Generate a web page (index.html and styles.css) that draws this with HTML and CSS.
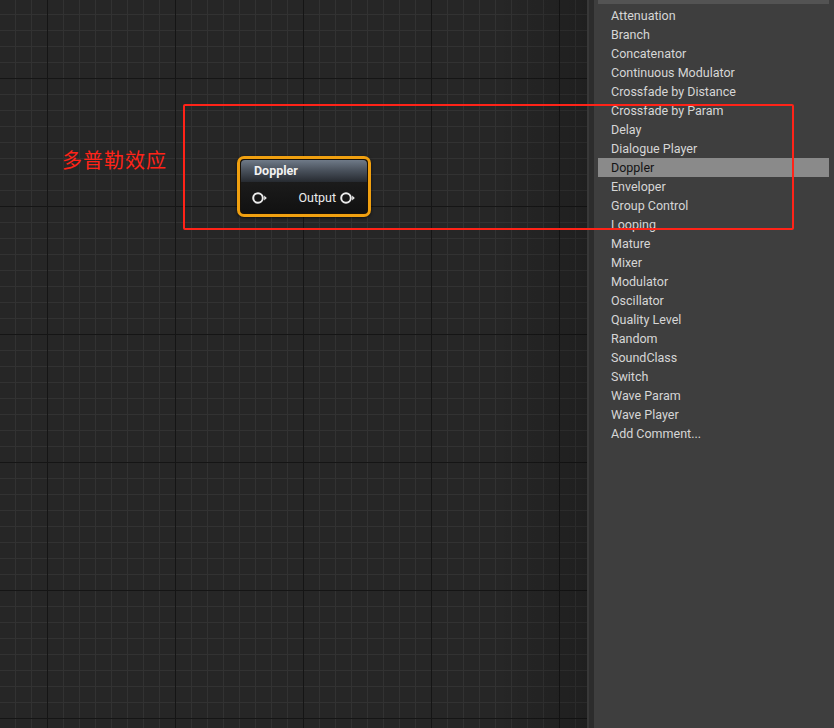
FILE: index.html
```html
<!DOCTYPE html>
<html>
<head>
<meta charset="utf-8">
<link rel="stylesheet" href="styles.css">
</head>
<body>
<div class="app">
  <div class="graph">
    <div class="note">多普勒效应</div>
    <div class="node">
      <div class="node-inner">
        <div class="node-title">Doppler</div>
        <div class="node-body">
          <span class="pin"><svg width="16" height="14" viewBox="0 0 16 14"><circle cx="6" cy="7" r="4.8" fill="none" stroke="#ececec" stroke-width="2"/><path d="M12.2 4.5 L14.8 7 L12.2 9.5 Z" fill="#ececec"/></svg></span>
          <span class="out">Output <svg width="16" height="14" viewBox="0 0 16 14"><circle cx="6" cy="7" r="4.8" fill="none" stroke="#ececec" stroke-width="2"/><path d="M12.2 4.5 L14.8 7 L12.2 9.5 Z" fill="#ececec"/></svg></span>
        </div>
      </div>
    </div>
  </div>
  <div class="sep"></div>
  <div class="panel">
    <div class="head">Sound Node</div>
    <ul class="list">
      <li>Attenuation</li>
      <li>Branch</li>
      <li>Concatenator</li>
      <li>Continuous Modulator</li>
      <li>Crossfade by Distance</li>
      <li>Crossfade by Param</li>
      <li>Delay</li>
      <li>Dialogue Player</li>
      <li class="sel">Doppler</li>
      <li>Enveloper</li>
      <li>Group Control</li>
      <li>Looping</li>
      <li>Mature</li>
      <li>Mixer</li>
      <li>Modulator</li>
      <li>Oscillator</li>
      <li>Quality Level</li>
      <li>Random</li>
      <li>SoundClass</li>
      <li>Switch</li>
      <li>Wave Param</li>
      <li>Wave Player</li>
      <li>Add Comment...</li>
    </ul>
  </div>
  <div class="redbox"></div>
</div>
</body>
</html>
```

FILE: styles.css
```css
html, body {
  margin: 0;
  padding: 0;
  width: 834px;
  height: 728px;
  overflow: hidden;
  background: #262626;
  font-family: Roboto, "Noto Sans", sans-serif;
}
.app {
  position: relative;
  display: flex;
  width: 834px;
  height: 728px;
}
.graph {
  position: relative;
  width: 587px;
  height: 728px;
  flex: none;
  overflow: hidden;
  background-color: #262626;
  background-image:
    linear-gradient(to right, #151515 1px, transparent 1px),
    linear-gradient(to bottom, #151515 1px, transparent 1px),
    linear-gradient(to right, #323232 1px, transparent 1px),
    linear-gradient(to bottom, #323232 1px, transparent 1px);
  background-size: 128px 128px, 128px 128px, 16px 16px, 16px 16px;
  background-position: 47px 0, 0 78px, 15px 0, 0 14px;
}
.graph::after {
  content: "";
  position: absolute;
  top: 0;
  right: 0;
  width: 90px;
  height: 100%;
  background: linear-gradient(to right, rgba(0,0,0,0), rgba(0,0,0,0.18));
  pointer-events: none;
}
.sep {
  width: 7px;
  flex: none;
  border-left: 2px solid #383838;
  box-sizing: border-box;
  background: #2c2c2c;
}
.panel {
  flex: 1;
  background: #3e3e3e;
  padding: 0 5px 0 4px;
  overflow: hidden;
}
.head {
  margin-top: -13px;
  height: 17px;
  margin-bottom: 2px;
  background: #535353;
  color: #cfcfcf;
  font-size: 13px;
  line-height: 17px;
  padding-left: 9px;
}
.list {
  list-style: none;
  margin: 0;
  padding: 0;
}
.list li {
  height: 19px;
  line-height: 19px;
  padding-left: 13px;
  font-size: 12.5px;
  color: #d6d6d6;
  white-space: nowrap;
}
.list li.sel {
  background: #8a8a8a;
  color: #141414;
}
.note {
  position: absolute;
  left: 62px;
  top: 147px;
  color: #ff2318;
  font-family: "Noto Sans CJK SC", sans-serif;
  font-size: 20px;
  line-height: 26px;
  letter-spacing: 1px;
}
.redbox {
  position: absolute;
  left: 183px;
  top: 104px;
  width: 611px;
  height: 126px;
  box-sizing: border-box;
  border: 2.5px solid #ff2318;
  border-radius: 2px;
  pointer-events: none;
}
.node {
  position: absolute;
  left: 237px;
  top: 156px;
  width: 134px;
  height: 61px;
  box-sizing: border-box;
  border: 3px solid #f0a010;
  border-radius: 7px;
  background: #1a1208;
  padding: 1px;
  box-shadow: 0 1px 3px rgba(0,0,0,0.6);
}
.node-inner {
  height: 100%;
  border-radius: 4px;
  background: #141414;
  overflow: hidden;
  display: flex;
  flex-direction: column;
}
.node-title {
  height: 22px;
  line-height: 22px;
  padding-left: 13px;
  font-size: 12.5px;
  font-weight: bold;
  color: #f2f2f2;
  background: linear-gradient(to bottom, #6f7a88 0%, #4b535e 45%, #262a30 100%);
}
.node-body {
  flex: 1;
  display: flex;
  align-items: center;
  justify-content: space-between;
  padding: 0 11px 0 11px;
  background: linear-gradient(to bottom, #1b1b1b, #111111);
}
.pin, .out {
  display: flex;
  align-items: center;
  color: #ececec;
  font-size: 12.5px;
}
.out svg {
  margin-left: 4px;
}
```
